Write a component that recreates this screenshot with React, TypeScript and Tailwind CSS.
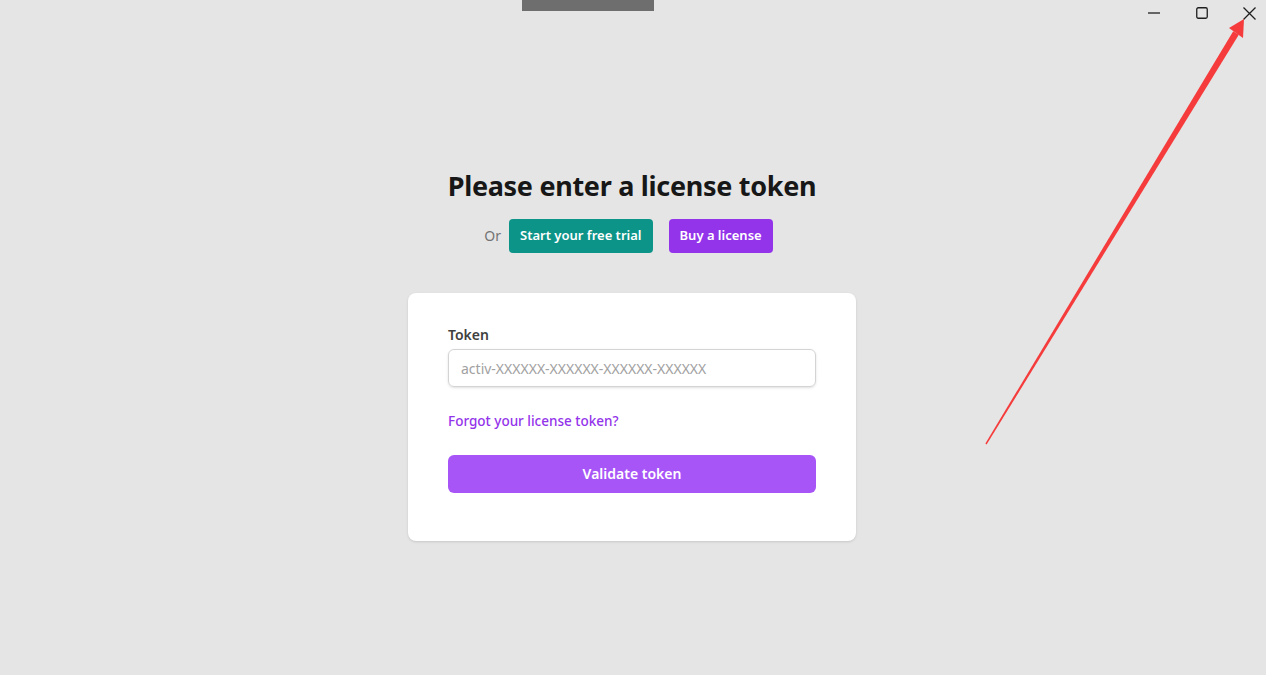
import React from 'react';

const LicensePage = () => {
  return (
    <div className="relative w-full h-[675px] overflow-hidden bg-[#e5e5e5] font-['Noto_Sans',sans-serif] text-gray-900">
      {/* drag handle at top */}
      <div className="absolute left-[522px] top-0 w-[132px] h-[11px] bg-[#6e6e6e]" />

      {/* window controls */}
      <div className="absolute right-0 top-0 flex items-center h-[26px]">
        <button className="w-[48px] h-[26px] flex items-center justify-center" title="Minimize">
          <svg width="12" height="12" viewBox="0 0 12 12">
            <path d="M0 6h12" stroke="#1f1f1f" strokeWidth="1.3" />
          </svg>
        </button>
        <button className="w-[48px] h-[26px] flex items-center justify-center" title="Maximize">
          <svg width="12" height="12" viewBox="0 0 12 12">
            <rect x="0.75" y="0.75" width="10.5" height="10.5" rx="1.5" fill="none" stroke="#1f1f1f" strokeWidth="1.3" />
          </svg>
        </button>
        <button className="w-[40px] h-[26px] flex items-center justify-end pr-[10px]" title="Close">
          <svg width="13" height="13" viewBox="0 0 13 13">
            <path d="M0.5 0.5l12 12M12.5 0.5l-12 12" stroke="#1f1f1f" strokeWidth="1.3" />
          </svg>
        </button>
      </div>

      {/* main content */}
      <div className="flex flex-col items-center pt-[168px] pr-[2px]">
        <h1 className="text-[27px] leading-9 font-bold text-[#171717] tracking-[-0.3px]">Please enter a license token</h1>

        <div className="flex items-center mt-[15px] mr-[7px]">
          <span className="text-sm text-neutral-500 mr-2">Or</span>
          <button className="h-[34px] px-[11px] rounded bg-[#0d9488] text-white text-[13px] font-semibold">
            Start your free trial
          </button>
          <button className="h-[34px] px-[11px] ml-4 rounded bg-[#9333ea] text-white text-[13px] font-semibold">
            Buy a license
          </button>
        </div>

        <div className="mt-10 w-[448px] bg-white rounded-lg shadow-sm px-10 pt-8 pb-12">
          <label className="block text-sm font-semibold text-neutral-700 leading-5">Token</label>
          <input
            type="text"
            placeholder="activ-XXXXXX-XXXXXX-XXXXXX-XXXXXX"
            className="mt-1 w-full h-[38px] px-3 border border-neutral-300 rounded-md text-sm placeholder-neutral-400 outline-none shadow-sm"
          />
          <a className="block mt-6 text-[13.5px] font-medium text-[#9333ea] leading-5">Forgot your license token?</a>
          <button className="mt-6 w-full h-[38px] rounded-md bg-[#a855f7] text-white text-sm font-semibold">
            Validate token
          </button>
        </div>
      </div>

      {/* annotation arrow */}
      <svg className="absolute left-0 top-0 pointer-events-none" width="1266" height="675">
        <polygon points="985.4,443.6 986.6,444.4 1238.8,34.8 1233.2,31.2" fill="#f53b3b" />
        <polygon points="1244,19 1229,28 1243,38" fill="#f53b3b" />
      </svg>
    </div>
  );
};

export default LicensePage;
